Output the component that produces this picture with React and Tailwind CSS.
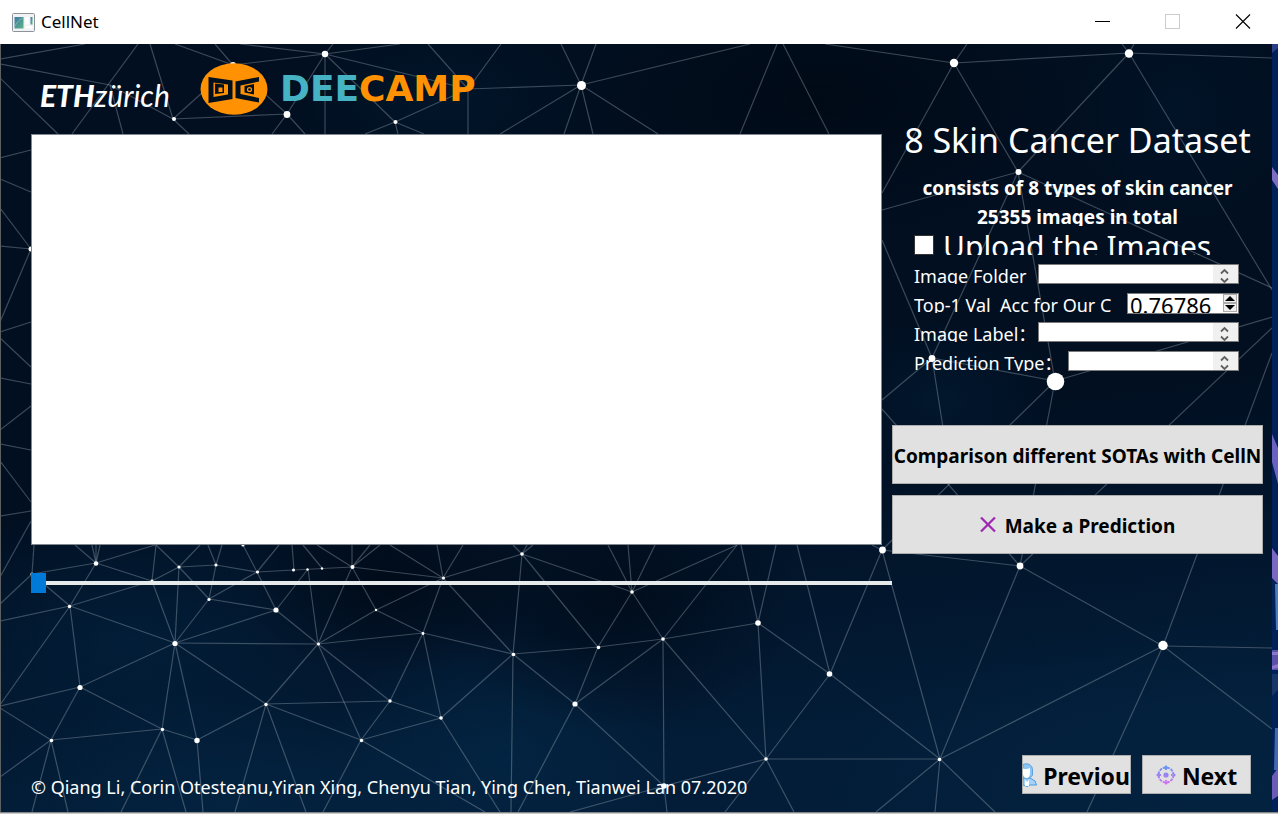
import React from "react";

const EDGES = [
  [0,59,85,44],[0,64,110,85],[110,85,173,119],[0,78,58,134],[138,44,72,134],[150,44,173,119],[110,85,123,134],[173,119,189,134],[173,119,287,114],[173,119,233,65],
  [233,65,175,44],[233,65,215,44],[233,65,325,54],[240,44,325,54],[233,65,287,114],[287,114,325,54],[287,114,272,134],[287,114,305,134],
  [325,54,400,44],[325,54,468,89],[325,54,395,122],[325,54,325,134],[325,54,333,44],[395,122,468,89],[395,122,365,134],[395,122,424,134],[395,122,398,134],
  [468,89,428,44],[468,89,501,44],[468,89,468,134],[468,89,581,85],[581,85,561,44],[581,85,596,44],[581,85,750,44],[581,85,500,134],[581,85,564,134],[581,85,593,134],[581,85,658,134],
  [777,44,740,134],[783,44,829,134],[825,44,954,63],[954,63,967,44],[954,63,1129,53],[954,63,882,193],[954,63,1018,172],[1129,53,1122,44],[1129,53,1134,44],[1129,53,1272,58],[1129,53,1018,172],[1129,53,1272,290],
  [1018,172,882,210],[1018,172,932,358],[1018,172,1055,381],[1018,172,1272,288],[882,240,932,358],[1272,317,1055,381],[1272,328,1020,566],[1272,353,1163,646],[932,358,882,400],[932,358,945,440],[932,358,1055,381],
  [882,409,1020,566],[1055,381,882,550],[1055,381,1020,566],[882,550,1020,566],[1020,566,1163,646],[1020,566,940,759],[1163,646,940,759],[1163,646,1272,648],[1163,646,1272,729],[1163,646,1087,812],
  [940,759,830,674],[940,759,882,550],[940,759,766,759],[940,759,876,812],[940,759,935,812],[940,759,995,812],
  [882,550,830,674],[882,550,872,545],[758,623,830,674],[758,623,766,759],[830,674,766,759],[830,674,797,545],[758,623,741,545],[758,623,776,545],[758,623,663,639],
  [663,639,766,759],[663,639,664,786],[663,639,575,704],[663,639,598,647],[663,639,632,592],[663,639,737,545],[632,592,737,545],[632,592,655,545],[632,592,628,545],[632,592,608,545],[632,592,522,554],[632,592,598,647],
  [598,647,513,654],[598,647,575,704],[513,654,575,704],[513,654,522,554],[513,654,443,578],[513,654,511,812],[513,654,441,718],[513,654,423,633],[575,704,664,786],[575,704,518,812],[522,554,598,647],[522,554,443,578],
  [522,554,513,545],[522,554,527,545],[522,554,533,545],[443,578,463,545],[766,759,664,786],[766,759,725,812],[766,759,794,812],[664,786,570,812],[664,786,667,812],[441,718,500,812],
  [32,574,96,563],[32,574,34,545],[32,574,0,604],[32,574,70,606],[96,563,75,545],[96,563,92,545],[96,563,96,545],[96,563,100,545],[96,563,155,545],[96,563,70,606],[96,563,152,581],[152,581,156,545],[152,581,179,567],
  [70,606,152,581],[70,606,0,621],[70,606,0,705],[70,606,80,687],[70,606,175,643],[175,643,152,581],[175,643,179,567],[175,643,209,599],[175,643,276,610],[175,643,318,644],[175,643,80,687],[175,643,162,729],[175,643,197,740],[175,643,266,704],
  [80,687,162,729],[80,687,51,740],[80,687,0,706],[0,708,51,740],[51,740,162,729],[51,740,0,777],[51,740,32,812],[51,740,68,812],[162,729,197,740],[162,729,121,812],[162,729,186,812],[197,740,266,704],[197,740,203,812],
  [266,704,318,644],[266,704,390,701],[266,704,361,740],[266,704,235,812],[266,704,306,812],[318,644,390,701],[318,644,361,740],[318,644,276,610],[318,644,423,633],[318,644,376,610],[318,644,308,569],[318,644,352,567],
  [376,610,352,567],[376,610,423,633],[376,610,443,578],[423,633,390,701],[423,633,441,718],[423,633,443,578],[390,701,441,718],[390,701,361,740],[441,718,361,740],[361,740,485,812],[361,740,323,812],
  [156,545,179,567],[179,567,216,565],[179,567,209,599],[179,567,200,545],[216,565,208,545],[216,565,222,545],[216,565,257,572],[216,565,209,599],[209,599,257,572],[209,599,276,610],[257,572,243,545],[257,572,276,610],[257,572,279,545],[257,572,294,570],
  [294,570,292,545],[294,570,352,567],[276,610,308,569],[322,568,303,545],[352,567,317,545],[352,567,352,545],[352,567,370,545],[352,567,380,545],[352,567,443,578],[443,578,390,545],[443,578,437,545],
  [0,158,31,150],[0,179,31,192],[0,208,31,249],[0,246,31,249],[31,249,0,322],[0,332,31,322],[0,338,31,367],[0,378,31,384],[0,430,31,406],[0,444,31,450],[0,461,31,502],[0,516,31,511],[31,521,0,577],
];

const NODES = [
  [174,119,2],[233,65,3],[287,114.5,3.4],[325,54,3.2],[395.5,122,2],[468,89,2],[581.5,85.5,4.5],[954,63,4.2],[1129,53.5,4.2],[1018.5,172,3],[932,358.5,3.4],[1055.5,381.5,8.8],[31,249,2.5],
  [96,563.5,2.3],[179,567,1.6],[216,565,1.6],[243,545,1.6],[257.5,572,1.6],[293.5,570,1.5],[307.5,569.5,1.2],[322,568.5,1.2],[352.5,567,2],[443.5,578,1.5],[69.5,606.5,1.7],[209,599.5,1.6],[276,610,2.6],[376,610,1.2],
  [175,643.5,2.6],[318.5,644,1.5],[423,633.5,1.4],[80,687.5,2.6],[266,704.5,1.7],[390,701,1.7],[441,718,1.8],[51.5,740.5,1.8],[162.5,729.5,1.7],[197,740.5,2.7],[361.5,740.5,1.7],[32,574,1.6],[152,581,1.4],
  [522,554,1.8],[632,592,1.8],[513.5,654.5,1.8],[598.5,647.5,1.8],[663,639,1.8],[758,623,2.8],[575,704,2.6],[829.5,674,2.8],[766,759,1.8],[664,786,2.8],[882.5,550,3.4],[1020,566,3.4],[1163,645.5,4.7],[939.5,759.5,1.8],
];

function Constellation() {
  return (
    <svg className="absolute inset-0 h-full w-full" viewBox="1 44 1271 768" preserveAspectRatio="none" aria-hidden="true">
      <defs>
        <linearGradient id="base" x1="0" y1="0" x2="0.2" y2="1">
          <stop offset="0" stopColor="#010f20" />
          <stop offset="0.6" stopColor="#010f21" />
          <stop offset="1" stopColor="#031d38" />
        </linearGradient>
        <radialGradient id="blue">
          <stop offset="0" stopColor="#032543" stopOpacity="0.9" />
          <stop offset="1" stopColor="#032543" stopOpacity="0" />
        </radialGradient>
        <radialGradient id="dark">
          <stop offset="0" stopColor="#000813" stopOpacity="0.9" />
          <stop offset="1" stopColor="#000813" stopOpacity="0" />
        </radialGradient>
      </defs>
      <rect x="1" y="44" width="1271" height="768" fill="url(#base)" />
      <ellipse cx="130" cy="640" rx="230" ry="140" fill="url(#blue)" opacity="0.6" />
      <ellipse cx="500" cy="760" rx="180" ry="130" fill="url(#blue)" />
      <ellipse cx="230" cy="800" rx="280" ry="110" fill="url(#blue)" opacity="0.8" />
      <ellipse cx="1230" cy="790" rx="420" ry="170" fill="url(#blue)" opacity="0.8" />
      <ellipse cx="440" cy="100" rx="150" ry="90" fill="url(#blue)" opacity="0.3" />
      <ellipse cx="940" cy="400" rx="120" ry="80" fill="url(#blue)" opacity="0.4" />
      <ellipse cx="1180" cy="110" rx="110" ry="120" fill="url(#blue)" opacity="0.2" />
      <ellipse cx="390" cy="585" rx="150" ry="90" fill="url(#dark)" opacity="0.8" />
      <ellipse cx="620" cy="600" rx="180" ry="130" fill="url(#dark)" opacity="0.7" />
      <ellipse cx="820" cy="100" rx="260" ry="140" fill="url(#dark)" opacity="0.8" />
      <g stroke="#c3ccd6" strokeOpacity="0.3" strokeWidth="1.2">
        {EDGES.map(([x1, y1, x2, y2], i) => (
          <line key={i} x1={x1} y1={y1} x2={x2} y2={y2} />
        ))}
      </g>
      <g fill="#fff">
        {NODES.map(([cx, cy, r], i) => (
          <circle key={i} cx={cx} cy={cy} r={r} />
        ))}
      </g>
    </svg>
  );
}

function DesktopStrip() {
  return (
    <svg className="w-[6px] shrink-0 self-stretch bg-[#00205a]" viewBox="0 44 6 768" preserveAspectRatio="none" aria-hidden="true">
      <rect x="0" y="44" width="6" height="768" fill="#00205a" />
      <path d="M0 44h6v4L0 53z" fill="#2b3f86" />
      <path d="M0 167l6 8v14l-6-9z" fill="#7d6cc4" />
      <path d="M0 434l6 14v36l-6-22z" fill="#6a62c0" />
      <path d="M0 548l6 8v28l-6-6z" fill="#7a68c4" />
      <path d="M3 584h3v46H4z" fill="#4f79b8" />
      <path d="M0 650h6v20H0z" fill="#5a51ad" />
      <path d="M0 652h6v3H0zM0 666l6-2v4l-6 1z" fill="#8b77cf" />
      <path d="M0 674h6v16l-6 6z" fill="#183468" />
      <path d="M3 728h3v42H2z" fill="#4467ae" />
      <path d="M0 776l6-8v28l-6 4z" fill="#6a5bb8" />
    </svg>
  );
}

function WindowIcon() {
  return (
    <svg className="h-[19px] w-[23px]" viewBox="0 0 23 19" aria-hidden="true">
      <defs>
        <linearGradient id="pane" x1="0" y1="0" x2="1" y2="1">
          <stop offset="0" stopColor="#3f79a8" />
          <stop offset="1" stopColor="#5bb483" />
        </linearGradient>
      </defs>
      <rect x="0.5" y="0.5" width="22" height="18" rx="1" fill="#f1f2f4" stroke="#8c9299" />
      <rect x="2.5" y="4" width="9" height="11.5" fill="url(#pane)" />
      <path d="M3 13c3-5 5-7 8.500-8" stroke="#79b8a8" fill="none" />
      <rect x="13.500" y="4" width="3" height="7.500" fill="#fff" />
      <rect x="18.500" y="4" width="2" height="7.500" fill="url(#pane)" />
      <rect x="13.500" y="13" width="7" height="2.500" fill="#fff" />
    </svg>
  );
}

function DeeCampBadge() {
  return (
    <svg className="h-[52px] w-[68px] shrink-0" viewBox="0 0 68 52" aria-hidden="true">
      <ellipse cx="34" cy="26" rx="33.500" ry="25.700" fill="#ff9103" />
      <path fillRule="evenodd" fill="#01101f" d="M8.500 14l24 3.500v18.500l-24 4zM13.500 19.500v14.500l14.500-2.500v-10z" />
      <path fillRule="evenodd" fill="#01101f" d="M15 20.500l9 1v8.500l-9 1zM18.500 24.500v4.500h4v-4.500z" />
      <path fill="#01101f" d="M59 14v4.500l-18.500 4v8.500l18.500 4v4.500L35.500 35V18.500z" />
      <path fill="#01101f" d="M54 21l-9.500 2v6.500l9.500 2z" />
      <circle cx="49.500" cy="26.500" r="2.600" fill="#ff9103" />
      <circle cx="49.500" cy="26.500" r="1.300" fill="#01101f" />
    </svg>
  );
}

function Combo({ id }) {
  return (
    <div className="relative h-full min-w-0 flex-1">
      <select id={id} className="block h-full w-full appearance-none border border-[#7a7a7a] bg-white" defaultValue="">
        <option value=""></option>
      </select>
      <svg className="pointer-events-none absolute top-px right-px h-[18px] w-[25px] bg-[#f0f0f0]" viewBox="0 0 25 18" fill="none" stroke="#606060" strokeWidth="1.800" aria-hidden="true">
        <path d="M8 8.500l3.500-3.500 3.500 3.500M8 13.500l3.500 3.500 3.500-3.500" />
      </svg>
    </div>
  );
}

function Row({ children }) {
  return <div className="flex h-5 gap-[9px] pr-6 pl-[22px] text-[18px] leading-6">{children}</div>;
}

const LABEL = "h-5 shrink-0 overflow-hidden whitespace-pre";
const BTN = "flex items-center justify-center border border-[#adadad] bg-[#e1e1e1] font-bold whitespace-nowrap text-black";

export default function App() {
  return (
    <div className="flex min-h-screen flex-col bg-white font-['Noto_Sans','Noto_Sans_CJK_SC',sans-serif]">
      <header className="flex h-11 items-center justify-between pl-3">
        <div className="flex items-center gap-[6px]">
          <WindowIcon />
          <h1 className="text-[17px] leading-6 text-black">CellNet</h1>
        </div>
        <div className="flex h-full">
          <button aria-label="Minimize" className="flex w-[70px] items-center justify-center">
            <svg className="h-4 w-4" viewBox="0 0 16 16" aria-hidden="true"><path d="M0 7.500h15" stroke="#000" /></svg>
          </button>
          <button aria-label="Maximize" disabled className="flex w-[70px] items-center justify-center">
            <svg className="h-4 w-4" viewBox="0 0 16 16" aria-hidden="true"><rect x="0.500" y="0.500" width="14" height="14" fill="none" stroke="#ccc" /></svg>
          </button>
          <button aria-label="Close" className="flex w-[70px] items-center justify-center">
            <svg className="h-4 w-4" viewBox="0 0 16 16" aria-hidden="true"><path d="M1 0.500l14 14M15 0.500L1 14.500" stroke="#000" strokeWidth="1.100" /></svg>
          </button>
        </div>
      </header>

      <div className="flex flex-1 border-l border-[#5d6063]">
        <main className="relative flex min-w-0 flex-1 flex-col bg-[#010f20]">
          <Constellation />
          <div className="relative flex flex-1 flex-col pr-[9px] pb-[18px] pl-[30px] text-white">
            <div className="flex flex-1">
              <section className="flex min-w-0 flex-1 flex-col">
                <div className="flex h-[90px] items-center pl-[9px]">
                  <div className="flex w-[130px] shrink-0 items-baseline pt-3 whitespace-nowrap italic font-['Lato',sans-serif] text-[30px] leading-10">
                    <span className="font-black">ETH</span>
                    <span>zürich</span>
                  </div>
                  <div className="ml-[30px] flex items-center gap-3">
                    <DeeCampBadge />
                    <span className="font-['DejaVu_Sans',sans-serif] text-[36px] leading-10 font-bold text-[#45b3c4]">DEE<span className="text-[#ff9103]">CAMP</span></span>
                  </div>
                </div>
                <div className="mr-[10px] flex-1 border border-[#828790] bg-white" />
                <input
                  type="range"
                  aria-label="Image position"
                  defaultValue="0"
                  className="mt-7 block h-5 w-full appearance-none bg-transparent [&::-webkit-slider-runnable-track]:h-1 [&::-webkit-slider-runnable-track]:bg-[#e7eaea] [&::-webkit-slider-thumb]:-mt-2 [&::-webkit-slider-thumb]:h-5 [&::-webkit-slider-thumb]:w-[15px] [&::-webkit-slider-thumb]:appearance-none [&::-webkit-slider-thumb]:bg-[#007ad9]"
                />
              </section>

              <section className="flex w-[371px] shrink-0 flex-col pt-[72px]">
                <h2 className="h-12 text-center text-[34px] leading-[48px] whitespace-nowrap">8 Skin Cancer Dataset</h2>
                <div className="mt-[13px] flex flex-col gap-[9px]">
                  <p className="h-5 overflow-hidden text-center text-[19px] leading-[22px] font-bold">consists of 8 types of skin cancer</p>
                  <p className="h-5 overflow-hidden text-center text-[19px] leading-[22px] font-bold">25355 images in total</p>
                  <div className="flex h-5 gap-[9px] overflow-hidden pl-[22px]">
                    <input id="upload" type="checkbox" className="h-5 w-5 appearance-none border border-[#333] bg-white checked:bg-[#007ad9]" />
                    <label htmlFor="upload" className="text-[30px] leading-6 whitespace-nowrap">Upload the Images</label>
                  </div>
                  <Row>
                    <label htmlFor="folder" className={LABEL + " w-[115px]"}>Image Folder</label>
                    <Combo id="folder" />
                  </Row>
                  <Row>
                    <label htmlFor="acc" className={LABEL + " w-[204px]"}>Top-1 Val  Acc for Our C</label>
                    <div className="flex h-[21px] min-w-0 flex-1 overflow-hidden border border-[#7a7a7a] bg-white">
                      <input id="acc" type="number" step="0.00001" defaultValue="0.76786" className="h-[22px] min-w-0 flex-1 appearance-none pl-[2px] text-[22px] leading-[22px] text-black outline-none [&::-webkit-inner-spin-button]:appearance-none" />
                      <div className="flex w-[15px] shrink-0 flex-col">
                        <button aria-label="Increase" className="flex h-[9px] w-[14px] items-center justify-center border border-[#adadad] bg-[#f0f0f0]">
                          <svg className="h-[5px] w-[10px] shrink-0" viewBox="0 0 10 5" aria-hidden="true"><path d="M0 5l5-5 5 5z" /></svg>
                        </button>
                        <button aria-label="Decrease" className="flex h-[9px] w-[14px] items-center justify-center border border-[#adadad] bg-[#f0f0f0]">
                          <svg className="h-[5px] w-[10px] shrink-0" viewBox="0 0 10 5" aria-hidden="true"><path d="M0 0l5 5 5-5z" /></svg>
                        </button>
                      </div>
                    </div>
                  </Row>
                  <Row>
                    <label htmlFor="label" className={LABEL + " w-[115px]"}>Image Label：</label>
                    <Combo id="label" />
                  </Row>
                  <Row>
                    <label htmlFor="type" className={LABEL + " w-[145px]"}>Prediction Type：</label>
                    <Combo id="type" />
                  </Row>
                </div>
                <button className={BTN + " mt-[54px] h-[59px] pt-1 text-[19px]"}>Comparison different SOTAs with CellN</button>
                <button className={BTN + " mt-[11px] h-[59px] gap-[9px] text-[19px]"}>
                  <svg className="h-4 w-4" viewBox="0 0 16 16" aria-hidden="true"><path d="M1 0.500l14 14M15 0.500L1 14.500" stroke="#9c27b0" strokeWidth="2.200" /></svg>
                  <span className="pt-1">Make a Prediction</span>
                </button>
              </section>
            </div>

            <footer className="mt-[162px] flex items-end justify-between pr-3">
              <p className="text-[18px] leading-[14px]">© Qiang Li, Corin Otesteanu,Yiran Xing, Chenyu Tian, Ying Chen, Tianwei Lan 07.2020</p>
              <div className="flex gap-[11px]">
                <button className={BTN + " h-[39px] w-[109px] gap-[6px] text-[23px]"}>
                  <svg className="h-6 w-[14px] shrink-0" viewBox="0 0 14 24" aria-hidden="true">
                    <path d="M0 15.500l4-1 4 1 4 2.500 1.500 4H7l-3 1.500L0 22z" fill="#a5d2fa" stroke="#4b9be0" />
                    <path d="M0 1.500C5-.5 9.500 2 9.500 7v5c-1 2-2 2.500-3 2.500L4 16l-4-1.500z" fill="#8cc4f4" stroke="#5aa4e2" />
                    <path d="M0 5.500c3 1 5 .5 7-.5v5c0 3-1.500 5-3.500 5S0 13 0 11zM2 17l2 2 2-2v6H2z" fill="#fff" />
                  </svg>
                  <span className="pt-1">Previou</span>
                </button>
                <button className={BTN + " h-[39px] w-[109px] gap-[6px] text-[23px]"}>
                  <svg className="h-5 w-5 shrink-0" viewBox="0 0 20 20" fill="none" aria-hidden="true">
                    <defs>
                      <linearGradient id="target" x1="0" y1="0" x2="0" y2="20" gradientUnits="userSpaceOnUse">
                        <stop offset="0" stopColor="#5a9bf5" />
                        <stop offset="0.5" stopColor="#9b83f2" />
                        <stop offset="1" stopColor="#dc6cf0" />
                      </linearGradient>
                    </defs>
                    <circle cx="10" cy="10" r="7.500" stroke="url(#target)" strokeWidth="1.800" strokeDasharray="3 1" />
                    <path d="M10 0l3 3.500H7zM10 20l3-3.500H7zM0 10l3.500-3v6zM20 10l-3.500-3v6zM9 3h2v2H9zM9 15h2v2H9zM3 9h2v2H3zM15 9h2v2h-2z" fill="url(#target)" />
                    <circle cx="10" cy="10" r="2.600" fill="url(#target)" />
                  </svg>
                  <span className="pt-1">Next</span>
                </button>
              </div>
            </footer>
          </div>
        </main>
        <DesktopStrip />
      </div>
      <div className="h-[2px] border-t border-[#85888b] bg-[#c9c9c9]" />
    </div>
  );
}
